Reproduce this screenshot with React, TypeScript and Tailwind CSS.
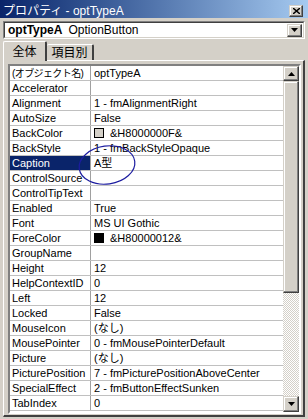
import React from 'react';

type Row = { name: string; value: string; swatch?: string; selected?: boolean; small?: boolean };

const rows: Row[] = [
  { name: '(オブジェクト名)', value: 'optTypeA', small: true },
  { name: 'Accelerator', value: '' },
  { name: 'Alignment', value: '1 - fmAlignmentRight' },
  { name: 'AutoSize', value: 'False' },
  { name: 'BackColor', value: '&H8000000F&', swatch: '#d4d0c8' },
  { name: 'BackStyle', value: '1 - fmBackStyleOpaque' },
  { name: 'Caption', value: 'A型', selected: true },
  { name: 'ControlSource', value: '' },
  { name: 'ControlTipText', value: '' },
  { name: 'Enabled', value: 'True' },
  { name: 'Font', value: 'MS UI Gothic' },
  { name: 'ForeColor', value: '&H80000012&', swatch: '#000000' },
  { name: 'GroupName', value: '' },
  { name: 'Height', value: '12' },
  { name: 'HelpContextID', value: '0' },
  { name: 'Left', value: '12' },
  { name: 'Locked', value: 'False' },
  { name: 'MouseIcon', value: '(なし)' },
  { name: 'MousePointer', value: '0 - fmMousePointerDefault' },
  { name: 'Picture', value: '(なし)' },
  { name: 'PicturePosition', value: '7 - fmPicturePositionAboveCenter' },
  { name: 'SpecialEffect', value: '2 - fmButtonEffectSunken' },
  { name: 'TabIndex', value: '0' },
];

const raised =
  'border border-t-[#d4d0c8] border-l-[#d4d0c8] border-r-[#404040] border-b-[#404040] shadow-[inset_-1px_-1px_#808080,inset_1px_1px_#ffffff] bg-[#d4d0c8]';

const Arrow = ({ up }: { up?: boolean }) => (
  <svg width="7" height="4" viewBox="0 0 7 4">
    {up ? <path d="M3.5 0 L7 4 L0 4 Z" fill="#000" /> : <path d="M0 0 L7 0 L3.5 4 Z" fill="#000" />}
  </svg>
);

const App: React.FC = () => {
  return (
    <div className="relative w-[308px] h-[419px] overflow-hidden bg-[#d4d0c8] flex flex-col font-['Liberation_Sans','Noto_Sans_CJK_JP',sans-serif] text-black">
      {/* title bar */}
      <div className="h-[18px] flex items-center justify-between pl-[3px] pr-[5px] pt-[3px] bg-gradient-to-r from-[#0a246a] to-[#a6caf0]">
        <span className="text-white text-[12px] leading-none">プロパティ - optTypeA</span>
        <div className={`w-[14px] h-[12px] flex items-center justify-center ${raised}`}>
          <svg width="7" height="6" viewBox="0 0 7 6">
            <path d="M0 0 L7 6 M7 0 L0 6" stroke="#000" strokeWidth="1.4" />
          </svg>
        </div>
      </div>

      {/* object combo */}
      <div className="mt-[3px] mx-[3px] h-[18px] border border-t-[#808080] border-l-[#808080] border-r-white border-b-white">
        <div className="h-full flex items-center bg-white border border-t-[#404040] border-l-[#404040] border-r-[#d4d0c8] border-b-[#d4d0c8] pl-[3px] pr-[1px]">
          <span className="text-[12px] font-bold leading-none">optTypeA</span>
          <span className="text-[12px] leading-none ml-[6px]">OptionButton</span>
          <div className={`ml-auto w-[15px] h-[13px] flex items-center justify-center ${raised}`}>
            <Arrow />
          </div>
        </div>
      </div>

      {/* tabs */}
      <div className="mt-[2px] flex items-end pl-[3px] h-[19px] relative z-10">
        <div className="h-[20px] -mb-[1px] w-[44px] flex items-center justify-center bg-[#d4d0c8] border-t border-l border-t-white border-l-white border-r-2 border-r-[#404040] rounded-t-[2px] text-[12px]">
          全体
        </div>
        <div className="h-[16px] w-[47px] flex items-center justify-center border-t border-t-white border-r-2 border-r-[#404040] rounded-t-[2px] text-[12px]">
          項目別
        </div>
      </div>

      {/* tab panel */}
      <div className="flex-1 min-h-0 mx-[3px] mb-[2px] flex flex-col border-t border-l border-t-white border-l-white border-r-2 border-b-2 border-r-[#404040] border-b-[#404040] pt-[3px] pl-[4px] pr-[2px] pb-[1px]">
        <div className="flex-1 min-h-0 flex border-2 border-t-[#808080] border-l-[#808080] border-r-white border-b-white overflow-hidden">
          <div className="flex-1 flex flex-col bg-white text-[11px]">
            {rows.map((r) => (
              <div key={r.name} className="h-[15px] shrink-0 flex border-b border-b-[#c0c0c0]">
                <div
                  className={`w-[81px] shrink-0 border-r border-r-[#a0a0a0] pl-[2px] flex items-center whitespace-nowrap overflow-hidden ${
                    r.selected ? 'bg-[#0a246a] text-white' : ''
                  } ${r.small ? 'text-[10px] tracking-[-0.6px]' : ''}`}
                >
                  {r.name}
                </div>
                <div className="flex-1 pl-[3px] flex items-center whitespace-nowrap overflow-hidden">
                  {r.swatch && (
                    <span className="w-[10px] h-[10px] border border-black mr-[6px] shrink-0" style={{ backgroundColor: r.swatch }} />
                  )}
                  {r.value}
                </div>
              </div>
            ))}
          </div>

          {/* scrollbar */}
          <div className="w-[16px] shrink-0 flex flex-col">
            <div className={`h-[15px] shrink-0 flex items-center justify-center ${raised}`}>
              <Arrow up />
            </div>
            <div className={`h-[212px] shrink-0 ${raised}`} />
            <div className="flex-1 bg-[repeating-conic-gradient(#ffffff_0_25%,#d4d0c8_0_50%)] bg-[length:2px_2px]" />
            <div className={`h-[16px] shrink-0 flex items-center justify-center ${raised}`}>
              <Arrow />
            </div>
          </div>
        </div>
      </div>

      {/* hand-drawn circle around caption value */}
      <svg className="absolute left-0 top-0 pointer-events-none" width="308" height="419">
        <ellipse cx="107" cy="165" rx="28" ry="19" transform="rotate(-8 107 165)" fill="none" stroke="#1c1ca0" strokeWidth="1.2" />
      </svg>
    </div>
  );
};

export default App;
